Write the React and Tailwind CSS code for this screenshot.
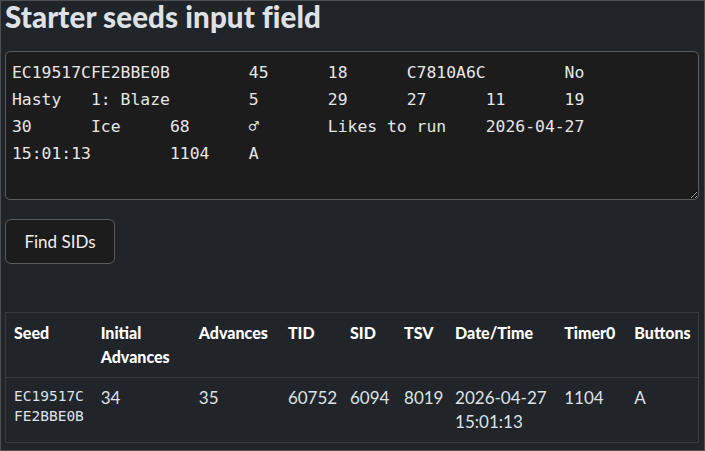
import React from "react";

const seedText =
  "EC19517CFE2BBE0B\t45\t18\tC7810A6C\tNo\nHasty\t1: Blaze\t5\t29\t27\t11\t19\n30\tIce\t68\t\u2642\tLikes to run\t2026-04-27\n15:01:13\t1104\tA";

const columns = [
  { label: "Seed", width: 87 },
  { label: "Initial Advances", width: 98 },
  { label: "Advances", width: 89 },
  { label: "TID", width: 62 },
  { label: "SID", width: 54 },
  { label: "TSV", width: 51 },
  { label: "Date/Time", width: 109 },
  { label: "Timer0", width: 70 },
  { label: "Buttons", width: 72 },
];

const results = [
  {
    seed: "EC19517CFE2BBE0B",
    initial: 34,
    advances: 35,
    tid: 60752,
    sid: 6094,
    tsv: 8019,
    date: "2026-04-27 15:01:13",
    timer0: 1104,
    buttons: "A",
  },
];

export default function App() {
  return (
    <div
      className="w-[705px] h-[451px] overflow-hidden border border-[#4d4f52] bg-[#212529] px-[4px] text-[#dee2e6]"
      style={{ fontFamily: "Lato, 'Open Sans', sans-serif" }}
    >
      <h1 className="m-0 mb-[18px] text-[29.5px] leading-[32px] font-black tracking-[0.1px] text-[#dee2e6]">
        Starter seeds input field
      </h1>

      <textarea
        readOnly
        value={seedText}
        className="block w-[694px] h-[149px] rounded-[5px] border border-[#5a5c5f] bg-[#1c1c1c] px-[6px] pt-[7px] text-[16.4px] leading-[27px] text-[#e6e6e6] whitespace-pre outline-none"
        style={{ fontFamily: "'DejaVu Sans Mono', monospace", tabSize: 8 }}
      />

      <button className="mt-[19px] block h-[45px] w-[110px] rounded-[6px] border border-[#595b5e] bg-[#1c1c1c] text-[17px] text-[#f0f0f0]">
        Find SIDs
      </button>

      <table className="mt-[48px] table-fixed border-collapse border border-[#373b3e] w-[694px]">
        <colgroup>
          {columns.map((c) => (
            <col key={c.label} style={{ width: c.width }} />
          ))}
        </colgroup>
        <thead>
          <tr className="border-b border-[#373b3e]">
            {columns.map((c) => (
              <th
                key={c.label}
                className="p-2 align-top text-left text-[16px] leading-[24px] font-black text-white"
              >
                {c.label}
              </th>
            ))}
          </tr>
        </thead>
        <tbody>
          {results.map((r) => (
            <tr key={r.seed} className="border-b border-[#373b3e]">
              <td
                className="p-2 pt-[8px] align-top text-[14.5px] leading-[20px] break-all"
                style={{ fontFamily: "'DejaVu Sans Mono', monospace" }}
              >
                {r.seed}
              </td>
              <td className="p-2 align-top text-[17px] leading-[24px]">{r.initial}</td>
              <td className="p-2 align-top text-[17px] leading-[24px]">{r.advances}</td>
              <td className="p-2 align-top text-[17px] leading-[24px]">{r.tid}</td>
              <td className="p-2 align-top text-[17px] leading-[24px]">{r.sid}</td>
              <td className="p-2 align-top text-[17px] leading-[24px]">{r.tsv}</td>
              <td className="p-2 align-top text-[17px] leading-[24px]">{r.date}</td>
              <td className="p-2 align-top text-[17px] leading-[24px]">{r.timer0}</td>
              <td className="p-2 align-top text-[17px] leading-[24px]">{r.buttons}</td>
            </tr>
          ))}
        </tbody>
      </table>
    </div>
  );
}
